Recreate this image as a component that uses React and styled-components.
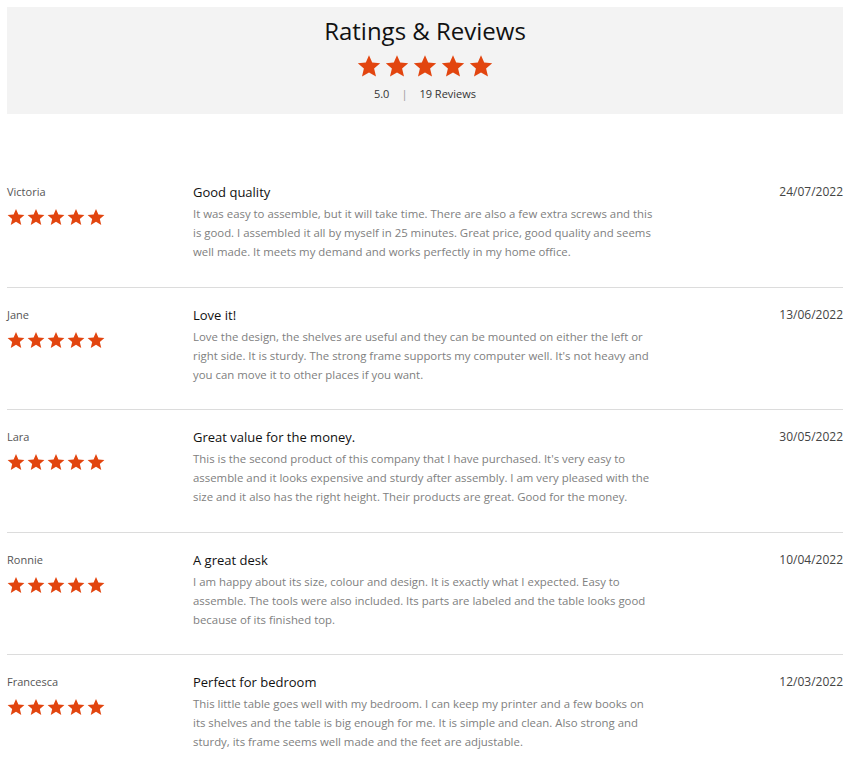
import React from 'react'
import styled, { createGlobalStyle } from 'styled-components'

const GlobalStyle = createGlobalStyle`
  body {
    margin: 0;
    background: #fff;
    font-family: "Open Sans", "Liberation Sans", sans-serif;
  }
`

const reviews = [
  {
    name: 'Victoria',
    title: 'Good quality',
    date: '24/07/2022',
    text: 'It was easy to assemble, but it will take time. There are also a few extra screws and this is good. I assembled it all by myself in 25 minutes. Great price, good quality and seems well made. It meets my demand and works perfectly in my home office.',
  },
  {
    name: 'Jane',
    title: 'Love it!',
    date: '13/06/2022',
    text: "Love the design, the shelves are useful and they can be mounted on either the left or right side. It is sturdy. The strong frame supports my computer well. It's not heavy and you can move it to other places if you want.",
  },
  {
    name: 'Lara',
    title: 'Great value for the money.',
    date: '30/05/2022',
    text: "This is the second product of this company that I have purchased. It's very easy to assemble and it looks expensive and sturdy after assembly. I am very pleased with the size and it also has the right height. Their products are great. Good for the money.",
  },
  {
    name: 'Ronnie',
    title: 'A great desk',
    date: '10/04/2022',
    text: 'I am happy about its size, colour and design. It is exactly what I expected. Easy to assemble. The tools were also included. Its parts are labeled and the table looks good because of its finished top.',
  },
  {
    name: 'Francesca',
    title: 'Perfect for bedroom',
    date: '12/03/2022',
    text: 'This little table goes well with my bedroom. I can keep my printer and a few books on its shelves and the table is big enough for me. It is simple and clean. Also strong and sturdy, its frame seems well made and the feet are adjustable.',
  },
]

const Page = styled.div`
  padding: 7px 7px 0;
`

const Summary = styled.section`
  background: #f3f3f3;
  height: 107px;
  display: flex;
  flex-direction: column;
  align-items: center;
  padding-top: 12px;
  box-sizing: border-box;
`

const Heading = styled.h1`
  margin: 0;
  font-size: 24px;
  font-weight: 500;
  color: #111;
  line-height: 24px;
`

const StarRow = styled.div`
  display: flex;
  gap: ${p => p.$gap}px;
  margin-top: ${p => p.$top || 0}px;
`

const Meta = styled.div`
  margin-top: 8px;
  font-size: 11px;
  color: #333;
  display: flex;
  gap: 12px;
`

const Sep = styled.span`
  color: #999;
`

const List = styled.div`
  margin-top: 64px;
`

const Review = styled.article`
  display: grid;
  grid-template-columns: 186px 470px 1fr;
  padding: 7px 0 25.5px;
  border-bottom: 1px solid ${p => (p.$last ? 'transparent' : '#dcdcdc')};
  & + & {
    padding-top: 20px;
  }
`

const Name = styled.div`
  font-size: 11px;
  color: #555;
  line-height: 13px;
  margin: 0 0 10px;
`

const Title = styled.h3`
  margin: 0 0 5px;
  font-size: 13px;
  font-weight: 500;
  color: #111;
  line-height: 14px;
`

const Body = styled.p`
  margin: 0;
  font-size: 11.4px;
  line-height: 19px;
  color: #808080;
  width: 462px;
`

const Date = styled.div`
  text-align: right;
  font-size: 12px;
  color: #444;
  line-height: 14px;
`

const Star = ({ size }) => (
  <svg width={size} height={size} viewBox="0 0 24 24">
    <path
      fill="#e2450f"
      d="M12 1.2l3.2 7.4 8 .7-6.1 5.3 1.9 7.9L12 18.4l-7 4.1 1.9-7.9L.8 9.3l8-.7z"
    />
  </svg>
)

const Stars = ({ size, gap, top }) => (
  <StarRow $gap={gap} $top={top}>
    {[0, 1, 2, 3, 4].map(i => (
      <Star key={i} size={size} />
    ))}
  </StarRow>
)

export default function App() {
  return (
    <Page>
      <GlobalStyle />
      <Summary>
        <Heading>Ratings &amp; Reviews</Heading>
        <Stars size={24} gap={4} top={11} />
        <Meta>
          <span>5.0</span>
          <Sep>|</Sep>
          <span>19 Reviews</span>
        </Meta>
      </Summary>
      <List>
        {reviews.map((r, i) => (
          <Review key={r.name} $last={i === reviews.length - 1}>
            <div>
              <Name>{r.name}</Name>
              <Stars size={18} gap={2} />
            </div>
            <div>
              <Title>{r.title}</Title>
              <Body>{r.text}</Body>
            </div>
            <Date>{r.date}</Date>
          </Review>
        ))}
      </List>
    </Page>
  )
}
